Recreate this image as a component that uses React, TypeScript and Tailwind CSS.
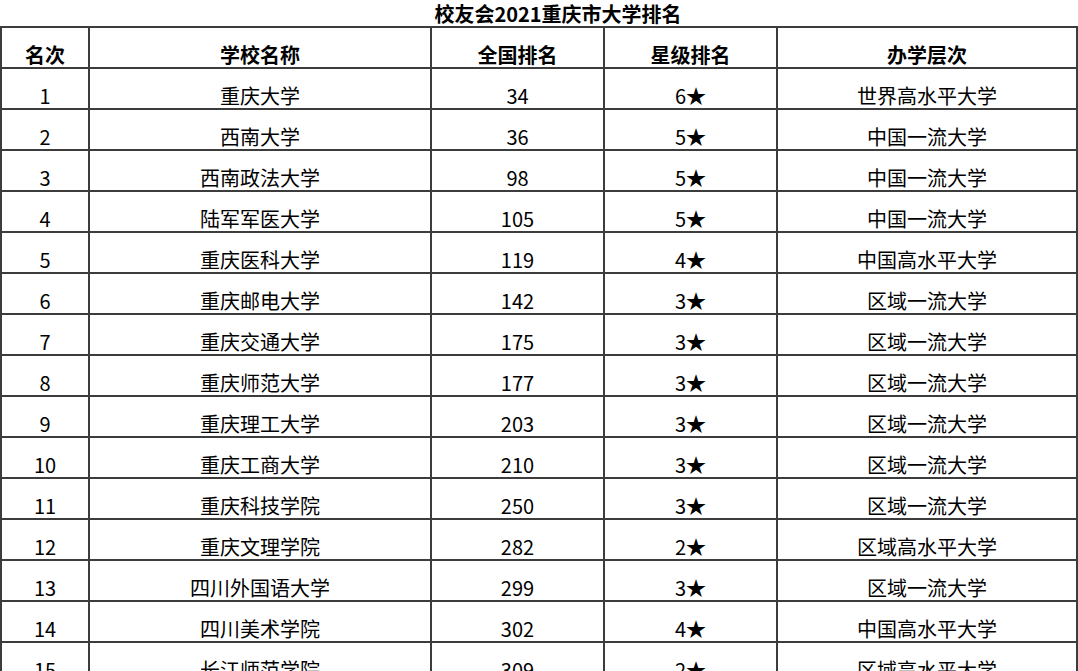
import React from "react";

const rows: [string, string, string, string, string][] = [
  ["1", "重庆大学", "34", "6★", "世界高水平大学"],
  ["2", "西南大学", "36", "5★", "中国一流大学"],
  ["3", "西南政法大学", "98", "5★", "中国一流大学"],
  ["4", "陆军军医大学", "105", "5★", "中国一流大学"],
  ["5", "重庆医科大学", "119", "4★", "中国高水平大学"],
  ["6", "重庆邮电大学", "142", "3★", "区域一流大学"],
  ["7", "重庆交通大学", "175", "3★", "区域一流大学"],
  ["8", "重庆师范大学", "177", "3★", "区域一流大学"],
  ["9", "重庆理工大学", "203", "3★", "区域一流大学"],
  ["10", "重庆工商大学", "210", "3★", "区域一流大学"],
  ["11", "重庆科技学院", "250", "3★", "区域一流大学"],
  ["12", "重庆文理学院", "282", "2★", "区域高水平大学"],
  ["13", "四川外国语大学", "299", "3★", "区域一流大学"],
  ["14", "四川美术学院", "302", "4★", "中国高水平大学"],
  ["15", "长江师范学院", "309", "2★", "区域高水平大学"],
];

const header = ["名次", "学校名称", "全国排名", "星级排名", "办学层次"];

function Row({ cells, bold }: { cells: string[]; bold?: boolean }) {
  return (
    <div className="grid grid-cols-[88px_342px_173px_173px_300px] h-[41px]">
      {cells.map((c, i) => (
        <div
          key={i}
          className={`flex items-end justify-center border-r-2 border-b-2 border-[#3c3c3c] pb-[2px] text-[20px] leading-[20px] text-black ${
            bold ? "font-bold" : "font-normal"
          }`}
        >
          {c}
        </div>
      ))}
    </div>
  );
}

export default function App() {
  return (
    <div
      className="w-[1078px] h-[671px] overflow-hidden bg-white"
      style={{ fontFamily: '"Noto Sans CJK SC", "Noto Sans", sans-serif' }}
    >
      <div className="h-[26px] flex justify-center pl-[38px] pt-[4px] text-[20px] leading-[20px] font-bold text-black whitespace-nowrap">
        校友会2021重庆市大学排名
      </div>
      <div className="border-l-2 border-t-2 border-[#3c3c3c]">
        <Row cells={header} bold />
        {rows.map((r, i) => (
          <Row key={i} cells={r} />
        ))}
      </div>
    </div>
  );
}
